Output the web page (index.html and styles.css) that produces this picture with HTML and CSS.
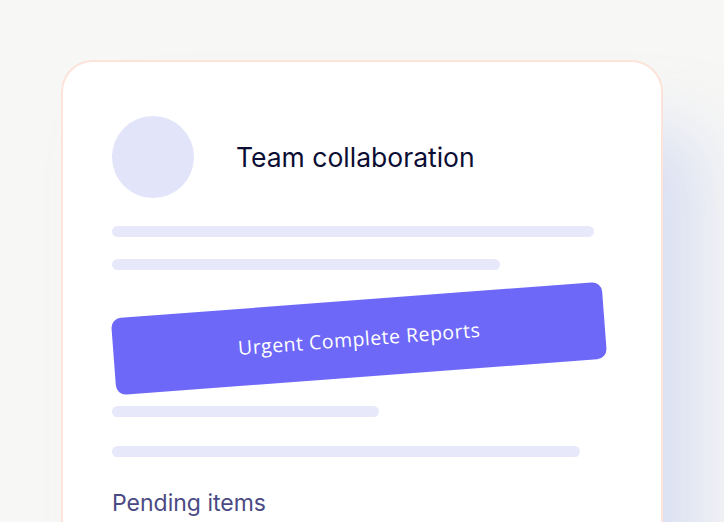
FILE: index.html
```html
<!DOCTYPE html>
<html>
<head>
<meta charset="utf-8">
<link rel="stylesheet" href="styles.css">
</head>
<body>
<div class="page">
  <div class="card">
    <div class="header">
      <div class="avatar"></div>
      <h1 class="title">Team collaboration</h1>
    </div>
    <div class="bar bar-1"></div>
    <div class="bar bar-2"></div>
    <div class="tag">Urgent Complete Reports</div>
    <div class="bar bar-3"></div>
    <div class="bar bar-4"></div>
    <h2 class="pending">Pending items</h2>
  </div>
</div>
</body>
</html>
```
FILE: styles.css
```css
html, body {
  margin: 0;
  padding: 0;
  background: #f7f7f5;
  overflow: hidden;
}
.page {
  width: 724px;
  height: 522px;
  padding: 60px 0 0 61px;
  box-sizing: border-box;
  overflow: hidden;
}
.card {
  width: 602px;
  height: 620px;
  box-sizing: border-box;
  background: #ffffff;
  border: 2px solid #fde4da;
  border-radius: 32px;
  padding: 54px 49px;
  display: flex;
  flex-direction: column;
  box-shadow: 50px 60px 70px -10px rgba(210, 217, 242, 0.8);
}
.header {
  display: flex;
  align-items: center;
  gap: 42px;
}
.avatar {
  width: 82px;
  height: 82px;
  border-radius: 50%;
  background: #e2e4f9;
  flex: none;
}
.title {
  margin: 0;
  font-family: Inter, "Liberation Sans", sans-serif;
  font-weight: 400;
  font-size: 26.5px;
  color: #0c0d33;
}
.bar {
  height: 11px;
  border-radius: 6px;
  background: #e7e8f9;
  flex: none;
}
.bar-1 { width: 482px; margin-top: 28px; }
.bar-2 { width: 388px; margin-top: 22px; }
.bar-3 { width: 267px; margin-top: 29px; }
.bar-4 { width: 468px; margin-top: 29px; }
.tag {
  flex: none;
  width: 492px;
  height: 77px;
  margin-top: 30px;
  margin-left: 1px;
  box-sizing: border-box;
  background: #6e68f9;
  border-radius: 10px;
  transform: rotate(-4.3deg);
  display: flex;
  align-items: center;
  justify-content: center;
  color: #ffffff;
  font-family: "Open Sans", "Liberation Sans", sans-serif;
  font-size: 19.5px;
  letter-spacing: 0.5px;
}
.pending {
  margin: 32px 0 0;
  font-family: Inter, "Liberation Sans", sans-serif;
  font-weight: 400;
  font-size: 23px;
  line-height: 28px;
  color: #4b4a84;
}
```
